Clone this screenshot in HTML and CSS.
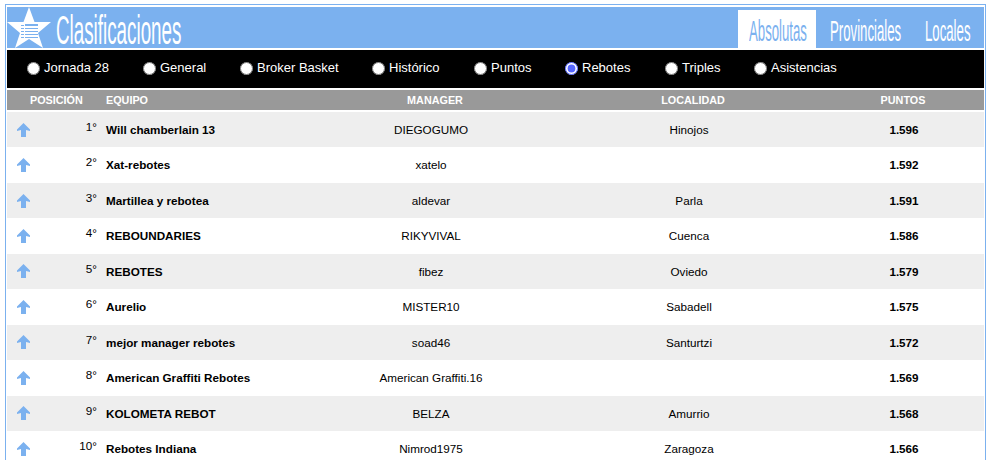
FILE: index.html
```html
<!DOCTYPE html>
<html lang="es">
<head>
<meta charset="utf-8">
<title>Clasificaciones</title>
<link rel="stylesheet" href="styles.css">
</head>
<body>
<div class="panel">
  <header class="top">
    <svg class="star" viewBox="0 0 44 41" width="44" height="41" aria-hidden="true">
      <polygon fill="#fff" points="22,0 27.5,15 44,15 31,26 36,41 22,32 8,41 13,26 0,15 16.5,15"/>
      <g fill="#7bb1ef">
        <rect x="14" y="18" width="3" height="1"/>
        <rect x="14" y="21" width="3" height="1"/>
        <rect x="14" y="24" width="3" height="1"/>
        <rect x="14" y="27" width="3" height="1"/>
        <rect x="14" y="30" width="3" height="1"/>
        <rect x="18" y="17" width="13" height="2"/>
        <rect x="18" y="21" width="13" height="1"/>
        <rect x="18" y="24" width="13" height="1"/>
        <rect x="18" y="27" width="13" height="1"/>
        <rect x="18" y="30" width="13" height="1"/>
      </g>
    </svg>
    <h1 class="title"><svg class="title-svg" viewBox="0 0 268 46" width="126" height="46" preserveAspectRatio="none"><text x="0" y="37">Clasificaciones</text></svg></h1>
    <nav class="tabs">
      <a class="tab active"><span>Absolutas</span></a>
      <a class="tab"><span>Provinciales</span></a>
      <a class="tab"><span>Locales</span></a>
    </nav>
  </header>
  <form class="filters">
    <label class="f f1"><input type="radio" name="c">Jornada 28</label>
    <label class="f f2"><input type="radio" name="c">General</label>
    <label class="f f3"><input type="radio" name="c">Broker Basket</label>
    <label class="f f4"><input type="radio" name="c">Histórico</label>
    <label class="f f5"><input type="radio" name="c">Puntos</label>
    <label class="f f6"><input type="radio" name="c" checked>Rebotes</label>
    <label class="f f7"><input type="radio" name="c">Triples</label>
    <label class="f f8"><input type="radio" name="c">Asistencias</label>
  </form>
  <div class="head">
    <div class="h-pos">POSICIÓN</div>
    <div class="h-team">EQUIPO</div>
    <div class="h-man">MANAGER</div>
    <div class="h-loc">LOCALIDAD</div>
    <div class="h-pts">PUNTOS</div>
  </div>
  <div class="rows">
    <div class="row"><svg class="up" viewBox="0 0 13 14" width="13" height="14"><path d="M6.500 0 13 6.500V8L9 7V14H4V7L0 8V6.500Z"/></svg><div class="pos">1°</div><div class="team">Will chamberlain 13</div><div class="man">DIEGOGUMO</div><div class="loc">Hinojos</div><div class="pts">1.596</div></div>
    <div class="row"><svg class="up" viewBox="0 0 13 14" width="13" height="14"><path d="M6.500 0 13 6.500V8L9 7V14H4V7L0 8V6.500Z"/></svg><div class="pos">2°</div><div class="team">Xat-rebotes</div><div class="man">xatelo</div><div class="loc"></div><div class="pts">1.592</div></div>
    <div class="row"><svg class="up" viewBox="0 0 13 14" width="13" height="14"><path d="M6.500 0 13 6.500V8L9 7V14H4V7L0 8V6.500Z"/></svg><div class="pos">3°</div><div class="team">Martillea y rebotea</div><div class="man">aldevar</div><div class="loc">Parla</div><div class="pts">1.591</div></div>
    <div class="row"><svg class="up" viewBox="0 0 13 14" width="13" height="14"><path d="M6.500 0 13 6.500V8L9 7V14H4V7L0 8V6.500Z"/></svg><div class="pos">4°</div><div class="team">REBOUNDARIES</div><div class="man">RIKYVIVAL</div><div class="loc">Cuenca</div><div class="pts">1.586</div></div>
    <div class="row"><svg class="up" viewBox="0 0 13 14" width="13" height="14"><path d="M6.500 0 13 6.500V8L9 7V14H4V7L0 8V6.500Z"/></svg><div class="pos">5°</div><div class="team">REBOTES</div><div class="man">fibez</div><div class="loc">Oviedo</div><div class="pts">1.579</div></div>
    <div class="row"><svg class="up" viewBox="0 0 13 14" width="13" height="14"><path d="M6.500 0 13 6.500V8L9 7V14H4V7L0 8V6.500Z"/></svg><div class="pos">6°</div><div class="team">Aurelio</div><div class="man">MISTER10</div><div class="loc">Sabadell</div><div class="pts">1.575</div></div>
    <div class="row"><svg class="up" viewBox="0 0 13 14" width="13" height="14"><path d="M6.500 0 13 6.500V8L9 7V14H4V7L0 8V6.500Z"/></svg><div class="pos">7°</div><div class="team">mejor manager rebotes</div><div class="man">soad46</div><div class="loc">Santurtzi</div><div class="pts">1.572</div></div>
    <div class="row"><svg class="up" viewBox="0 0 13 14" width="13" height="14"><path d="M6.500 0 13 6.500V8L9 7V14H4V7L0 8V6.500Z"/></svg><div class="pos">8°</div><div class="team">American Graffiti Rebotes</div><div class="man">American Graffiti.16</div><div class="loc"></div><div class="pts">1.569</div></div>
    <div class="row"><svg class="up" viewBox="0 0 13 14" width="13" height="14"><path d="M6.500 0 13 6.500V8L9 7V14H4V7L0 8V6.500Z"/></svg><div class="pos">9°</div><div class="team">KOLOMETA REBOT</div><div class="man">BELZA</div><div class="loc">Amurrio</div><div class="pts">1.568</div></div>
    <div class="row"><svg class="up" viewBox="0 0 13 14" width="13" height="14"><path d="M6.500 0 13 6.500V8L9 7V14H4V7L0 8V6.500Z"/></svg><div class="pos">10°</div><div class="team">Rebotes Indiana</div><div class="man">Nimrod1975</div><div class="loc">Zaragoza</div><div class="pts">1.566</div></div>
  </div>
</div>
</body>
</html>
```
FILE: styles.css
```css
html, body { height: 100%; }
body {
  margin: 0;
  padding: 4px 5px 0;
  overflow: hidden;
  background: #fff;
  font-family: "Liberation Sans", Arial, sans-serif;
  font-size: 11.7px;
  color: #000;
  box-sizing: border-box;
}
.panel {
  width: 981px;
  border: 1px solid #7bb1ef;
  border-bottom: 0;
  padding: 2px 1px 0;
  box-sizing: border-box;
}
.top {
  height: 41px;
  background: #7bb1ef;
  display: flex;
  align-items: flex-end;
}
.star { flex: none; margin-right: 5px; }
.title {
  margin: 0 0 -5px;
  width: 126px;
  height: 46px;
  font-weight: 400;
}
.title-svg { display: block; }
.title-svg text {
  font-family: "Liberation Sans Narrow", "Liberation Sans", sans-serif;
  font-size: 40px;
  fill: #fff;
}
.tab span {
  display: inline-block;
  transform-origin: 0 50%;
  font-family: "Liberation Sans Narrow", "Liberation Sans", sans-serif;
  color: #fff;
  white-space: nowrap;
  font-size: 29px;
  line-height: 28px;
  transform: scaleX(.455);
}
.tabs { margin-left: auto; display: flex; height: 38px; }
.tab {
  display: block;
  height: 38px;
  box-sizing: border-box;
  padding-top: 7px;
  overflow: hidden;
}
.tab:nth-child(1) { width: 78px; padding-left: 11px; }
.tab:nth-child(2) { width: 95px; padding-left: 14px; }
.tab:nth-child(3) { width: 73px; padding-left: 14px; }
.tab.active { background: #fff; }
.tab.active span { color: #7bb1ef; }
.filters {
  margin-top: 2px;
  height: 38px;
  background: #000;
  display: flex;
  align-items: center;
  color: #fff;
  font-size: 13px;
  box-sizing: border-box;
  padding-left: 20px;
}
.f { display: flex; align-items: center; white-space: nowrap; position: relative; top: -2px; }
.f input { margin: 2px 4px 0 0; width: 13px; height: 13px; accent-color: #5566ff; flex: none; }
.f1 { width: 116px; }
.f2 { width: 97px; }
.f3 { width: 132px; }
.f4 { width: 102px; }
.f5 { width: 91px; }
.f6 { width: 100px; }
.f7 { width: 89px; }
.head, .row {
  display: grid;
  grid-template-columns: 34px 56px 209px 250px 266px 1fr;
}
.head {
  margin-top: 2px;
  height: 20px;
  background: #999;
  color: #fff;
  font-size: 10.8px;
  font-weight: 700;
  line-height: 20px;
  align-items: center;
}
.h-pos { grid-column: 1 / 3; padding-left: 23px; }
.h-team { grid-column: 3; padding-left: 9px; }
.h-man { grid-column: 4; text-align: center; padding-left: 8px; }
.h-loc { grid-column: 5; text-align: center; padding-left: 8px; }
.h-pts { grid-column: 6; text-align: center; }
.rows { margin-top: 2px; }
.row { height: 35.45px; align-items: center; line-height: 13px; }
.row:nth-child(odd) { background: #eee; }
.up { justify-self: start; margin: 0 0 0 10px; fill: #7bb1ef; }
.pos { text-align: right; padding-bottom: 6.45px; }
.team { font-weight: 700; padding-left: 9px; padding-bottom: .45px; }
.man, .loc { text-align: center; padding-bottom: .45px; }
.pts { text-align: center; font-weight: 700; padding-bottom: .45px; padding-left: 2px; }
```
